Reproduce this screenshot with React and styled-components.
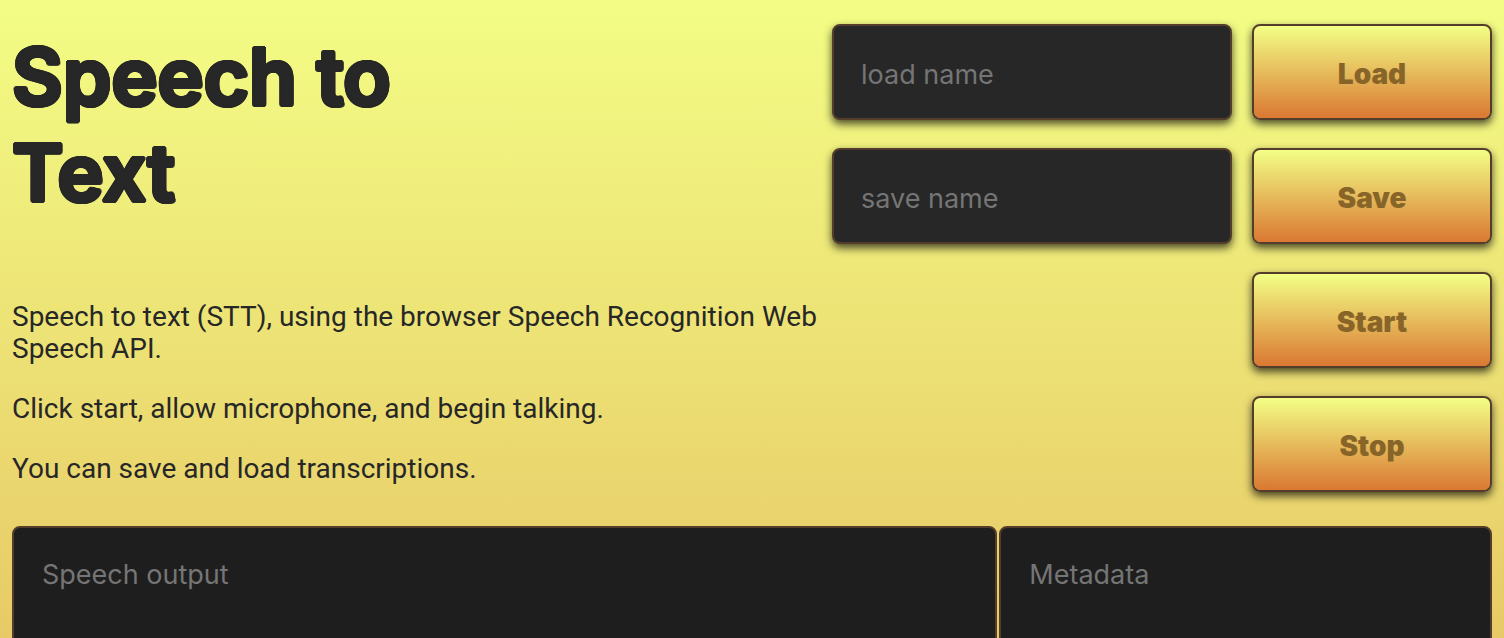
import React from "react";
import styled, { createGlobalStyle } from "styled-components";

const ink = "#272727";
const edge = "#543d2b";
const shadow = "0 4px 8px rgba(0, 0, 0, 0.7)";

// Zero-blur copies of the glyphs on a small circle give heavy, rounded letters.
const rounding = [
  [2, 0], [2, 1], [1, 2], [0, 2], [-1, 2], [-2, 1],
  [-2, 0], [-2, -1], [-1, -2], [0, -2], [1, -2], [2, -1],
]
  .map(([x, y]) => `${x}px ${y}px 0 ${ink}`)
  .join(", ");

const GlobalStyle = createGlobalStyle`
  * { box-sizing: border-box; }
  html { scrollbar-width: none; }
  body {
    margin: 0;
    color: ${ink};
    font-family: Roboto, sans-serif;
    font-size: 28px;
    line-height: 32px;
    background: linear-gradient(#f3fd85, #e7ca67) fixed;
  }
`;

const Page = styled.main`
  padding: 24px 12px 0;
`;

const Header = styled.header`
  display: grid;
  grid-template-columns: minmax(0, 1fr) auto;
  margin-bottom: 34px;
`;

const Intro = styled.section`
  padding-top: 5px;
`;

const Title = styled.h1`
  max-width: 420px;
  margin: 0 0 80px;
  font-family: Inter, sans-serif;
  font-size: 78px;
  font-weight: 600;
  line-height: 96px;
  text-shadow: ${rounding};
`;

const Paragraph = styled.p`
  margin: 0 0 28px;

  &:last-child { margin-bottom: 0; }
`;

const Controls = styled.form`
  display: grid;
  grid-template-columns: 400px 240px;
  gap: 28px 20px;
  align-content: start;
`;

const NameInput = styled.input`
  height: 96px;
  padding: 4px 27px 0;
  border: 2px solid ${edge};
  border-radius: 8px;
  background: ${ink};
  box-shadow: ${shadow};
  color: #eee;
  font: 27px/32px Inter, sans-serif;

  &::placeholder { color: #757575; }
`;

const Button = styled.button`
  grid-column: 2;
  height: 96px;
  padding: 4px 28px 0;
  border: 2px solid ${edge};
  border-radius: 8px;
  background: linear-gradient(#f3ff86, #da7832) padding-box;
  box-shadow: ${shadow};
  color: #876529;
  font: 900 28px/32px Inter, sans-serif;
`;

const Outputs = styled.section`
  display: grid;
  grid-template-columns: 2fr 1fr;
  gap: 2px;
`;

const Output = styled.textarea`
  display: block;
  width: 100%;
  height: 400px;
  padding: 31px 28px;
  border: 2px solid ${edge};
  border-radius: 8px;
  background: #1e1e1e;
  color: #eee;
  font: 27px/32px Inter, sans-serif;
  resize: none;

  &::placeholder { color: #757575; }
`;

export default function App() {
  return (
    <>
      <GlobalStyle />
      <Page>
        <Header>
          <Intro>
            <Title>Speech to Text</Title>
            <Paragraph>
              Speech to text (STT), using the browser Speech Recognition Web Speech API.
            </Paragraph>
            <Paragraph>Click start, allow microphone, and begin talking.</Paragraph>
            <Paragraph>You can save and load transcriptions.</Paragraph>
          </Intro>
          <Controls onSubmit={(event) => event.preventDefault()}>
            <NameInput type="text" placeholder="load name" aria-label="load name" />
            <Button type="button">Load</Button>
            <NameInput type="text" placeholder="save name" aria-label="save name" />
            <Button type="button">Save</Button>
            <Button type="button">Start</Button>
            <Button type="button">Stop</Button>
          </Controls>
        </Header>
        <Outputs>
          <Output placeholder="Speech output" aria-label="Speech output" />
          <Output placeholder="Metadata" aria-label="Metadata" />
        </Outputs>
      </Page>
    </>
  );
}
